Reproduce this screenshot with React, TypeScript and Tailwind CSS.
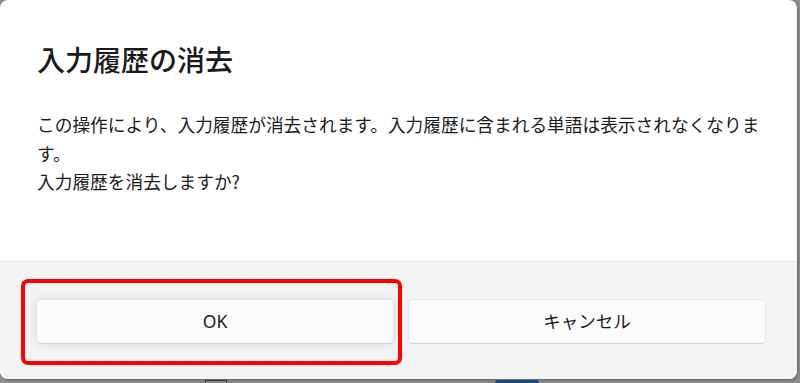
// 入力履歴の消去 — confirmation dialog, OK button marked with a red frame.

const JP = { fontFamily: '"Noto Sans CJK JP", "Noto Sans", sans-serif' }
const BTN = { fontFamily: '"Noto Sans", "Noto Sans CJK JP", sans-serif' }

function DialogButton({ label, focused }: { label: string; focused?: boolean }) {
  return (
    <button
      style={BTN}
      className={
        'flex h-[45px] w-[358px] items-center justify-center rounded-[5px] border border-[#e3e3e3] border-b-[#cfcfcf] bg-[#fbfbfb] text-[17.5px] text-[#1b1b1b] ' +
        (focused ? 'shadow-[0_0_8px_rgba(0,0,0,0.10)]' : '')
      }
    >
      {label}
    </button>
  )
}

export default function App() {
  return (
    <div className="relative h-[383px] w-[800px] overflow-hidden bg-[#8e8e8e]" style={JP}>
      {/* desktop bits peeking under the dialog */}
      <div className="absolute left-[205px] top-[380px] h-[6px] w-[22px] border border-[#3a3a3a]" />
      <div className="absolute left-[495px] top-[380px] h-[6px] w-[44px] rounded-t-[3px] bg-[#1f4f86]" />

      <div className="relative flex h-[379px] w-[797px] flex-col overflow-hidden rounded-[8px] bg-white shadow-[1px_1px_3px_rgba(0,0,0,0.35)]">
        <div className="flex h-[261px] flex-col px-[37px] pt-[38px]">
          <h1 className="text-[28px] font-medium leading-[42px] text-[#1a1a1a]">入力履歴の消去</h1>
          <p className="mt-[30px] text-[17.7px] leading-[28.5px] text-[#1a1a1a]">
            この操作により、入力履歴が消去されます。入力履歴に含まれる単語は表示されなくなりま
            <br />
            す。
            <br />
            入力履歴を消去しますか?
          </p>
        </div>

        <div className="flex flex-1 gap-[14px] border-t border-[#e5e5e5] bg-[#f3f3f3] pl-[36px] pt-[37px]">
          <DialogButton label="OK" focused />
          <DialogButton label="キャンセル" />
        </div>

        {/* annotation frame around OK */}
        <div className="absolute left-[21px] top-[279px] h-[86px] w-[381px] rounded-[7px] border-[4px] border-[#ff0000]" />
      </div>
    </div>
  )
}
